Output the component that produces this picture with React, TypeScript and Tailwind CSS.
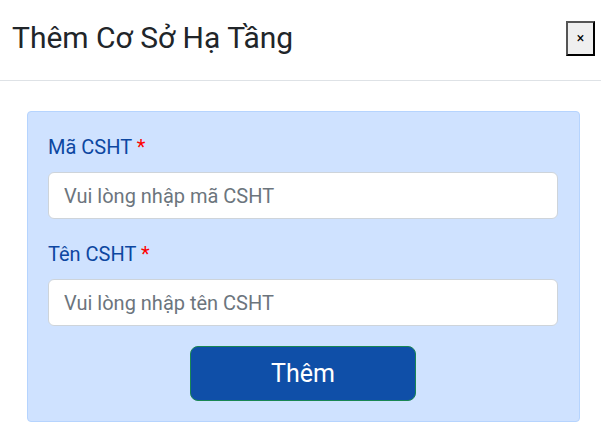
export default function App() {
    return (
        <div className="w-[601px] h-[442px] bg-white font-['Roboto',sans-serif] text-[#212529]">
            <div className="flex items-start justify-between h-[81px] border-b border-[#dee2e6] pl-3 pr-[6px] pt-[19px]">
                <h1 className="text-[30px] leading-[38px] font-normal">
                    Thêm Cơ Sở Hạ Tầng
                </h1>
                <button className="mt-[2px] w-[29px] h-[35px] flex items-center justify-center bg-[#efefef] border-2 border-t-[#555] border-l-[#555] border-r-black border-b-black text-[14px] text-black">
                    ×
                </button>
            </div>
            <div className="pl-[27px] pr-[21px] pt-[30px]">
                <form
                    className="bg-[#cfe2ff] border border-[#b6d4fe] rounded-[4px] pl-5 pr-[21px] pt-[22px] pb-5"
                    onSubmit={(e) => e.preventDefault()}
                >
                    <label className="block text-[20px] leading-[27px] text-[#0d47a1]">
                        Mã CSHT <span className="text-[#ff0000]">*</span>
                    </label>
                    <input
                        placeholder="Vui lòng nhập mã CSHT"
                        className="mt-[11px] w-full h-[47px] bg-white border border-[#ced4da] rounded-[6px] px-[15px] text-[20px] placeholder:text-[#6c757d] outline-none"
                    />
                    <label className="block mt-[22px] text-[20px] leading-[27px] text-[#0d47a1]">
                        Tên CSHT <span className="text-[#ff0000]">*</span>
                    </label>
                    <input
                        placeholder="Vui lòng nhập tên CSHT"
                        className="mt-[11px] w-full h-[47px] bg-white border border-[#ced4da] rounded-[6px] px-[15px] text-[20px] placeholder:text-[#6c757d] outline-none"
                    />
                    <div className="flex justify-center mt-[20px]">
                        <button className="w-[226px] h-[55px] bg-[#0f4fa8] border border-[#198754] rounded-[8px] text-white text-[25px]">
                            Thêm
                        </button>
                    </div>
                </form>
            </div>
        </div>
    );
}
